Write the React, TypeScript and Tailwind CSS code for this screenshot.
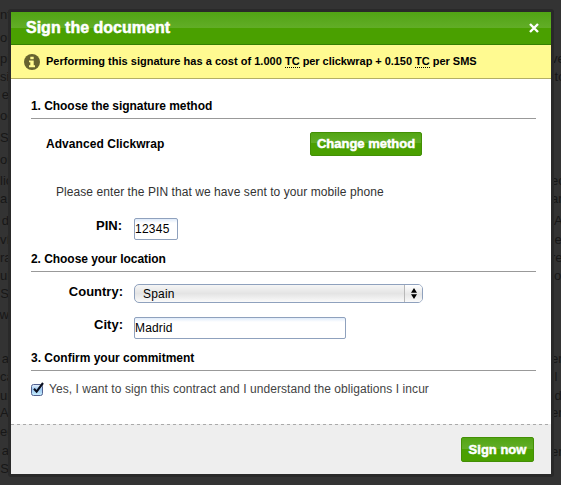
import React from 'react';

type Line = { text: string; center: number };

const leftLines: Line[] = [
  { text: 'nt', center: 15 }, { text: 'ou', center: 38 }, { text: 'pi', center: 59 },
  { text: 'si', center: 77 }, { text: 'e', center: 95 }, { text: 'oo', center: 116 },
  { text: 'SM', center: 138 }, { text: 'or', center: 160 }, { text: 'lic', center: 181 },
  { text: 'a c', center: 199 }, { text: 'd', center: 221 }, { text: 'ví', center: 240 },
  { text: 'ra', center: 258 }, { text: 'ul', center: 276 }, { text: 'S', center: 294 },
  { text: 'w', center: 315 }, { text: 'a', center: 359 }, { text: 'ca', center: 377 },
  { text: 'ur', center: 396 }, { text: 'Ac', center: 413 }, { text: 'eg', center: 432 },
  { text: 'a', center: 451 }, { text: 'S', center: 469 },
];

const rightLines: Line[] = [
  { text: 've', center: 59 }, { text: ' to', center: 77 }, { text: 'ec', center: 181 },
  { text: 'ar', center: 199 }, { text: ' A', center: 221 }, { text: ' es', center: 240 },
  { text: 're', center: 258 }, { text: 'lo', center: 276 }, { text: 'er', center: 359 },
  { text: ' l', center: 377 }, { text: ' de', center: 396 }, { text: 'er', center: 413 },
  { text: 'er', center: 452 },
];

function PageText({ lines, side }: { lines: Line[]; side: 'left' | 'right' }) {
  return (
    <div className={side === 'left' ? 'flex w-[9px] flex-col items-start overflow-hidden' : 'flex w-[10px] flex-col items-start overflow-hidden'}>
      {lines.map((line, i) => (
        <span
          key={i}
          className={
            side === 'left' && line.text.length === 1
              ? 'shrink-0 self-end whitespace-pre text-[13px] leading-4 text-[#171717]'
              : 'shrink-0 whitespace-pre text-[13px] leading-4 text-[#171717]'
          }
          style={{ marginTop: line.center - 8 - (i ? lines[i - 1].center + 8 : 0) }}
        >
          {line.text}
        </span>
      ))}
    </div>
  );
}

function SectionTitle({ children }: { children: React.ReactNode }) {
  return (
    <h2 className="h-5 border-b border-[#999] text-[12px] font-bold leading-[14px] tracking-[-0.05px] text-black">{children}</h2>
  );
}

function GreenButton({ className, children }: { className: string; children: React.ReactNode }) {
  return (
    <button
      className={`flex items-center justify-center whitespace-nowrap rounded-[2px] border border-[#438f05] bg-[linear-gradient(#52a514_0,#62ad27_46%,#4aa000_46%,#4aa000_100%)] text-[13px] font-bold leading-4 text-white [-webkit-text-stroke:0.5px_white] ${className}`}
    >
      {children}
    </button>
  );
}

function InfoIcon() {
  return (
    <svg className="block shrink-0" width="16" height="16" viewBox="0 0 16 16">
      <circle cx="8" cy="8" r="8" fill="#66632f" />
      <path d="M6.3 2.8h3.4v2.5H6.3zM5 6.4h4.7v4.9h1.3v1.9H5v-1.9h1.3V8.3H5z" fill="#fffa91" />
    </svg>
  );
}

function CheckIcon() {
  return (
    <svg className="block shrink-0" width="14" height="15" viewBox="0 0 14 15">
      <defs>
        <linearGradient id="box" x1="0" y1="0" x2="0" y2="1">
          <stop offset="0" stopColor="#eaf4ff" />
          <stop offset="0.45" stopColor="#9bc7f0" />
          <stop offset="1" stopColor="#c9f0ff" />
        </linearGradient>
      </defs>
      <rect x="0.5" y="2.5" width="11" height="11" rx="2" fill="url(#box)" stroke="#52608f" />
      <path d="M3 6.8 5.6 9.6 12 1" fill="none" stroke="#0b1020" strokeWidth="2.1" />
    </svg>
  );
}

export default function App() {
  return (
    <div className="relative h-[485px] w-[561px] overflow-hidden bg-[#333] font-['Liberation_Sans',Arial,sans-serif]">
      <div className="flex h-full justify-between">
        <PageText lines={leftLines} side="left" />
        <PageText lines={rightLines} side="right" />
      </div>

      <div className="absolute left-2 top-[9px] flex h-[468px] w-[546px] flex-col overflow-hidden rounded-[3px] border-[3px] border-[#292929] bg-white">
        <header className="flex h-[33px] shrink-0 items-center justify-between border-b border-[#348000] bg-[linear-gradient(#51a414_0,#62ad27_16px,#4aa000_16px,#4aa000_100%)] pl-[15px] pr-3">
          <h1 className="text-[16px] font-bold leading-5 text-white [-webkit-text-stroke:0.5px_white]">Sign the document</h1>
          <svg width="10" height="10" viewBox="0 0 10 10">
            <path d="M1 1 9 9M9 1 1 9" stroke="white" strokeWidth="2.4" />
          </svg>
        </header>

        <div className="flex h-[34px] shrink-0 items-center border-b border-[#b3af65] bg-[#fffa91] pl-[13px] text-[11px] font-bold leading-[13px] text-black">
          <InfoIcon />
          <p className="ml-1.5 whitespace-nowrap">
            <span className="tracking-[0.025px]">Performing this signature has a cost of 1.000 </span>
            <abbr className="border-b border-dotted border-black no-underline">TC</abbr>
            <span className="tracking-[-0.05px]"> per clickwrap + 0.150 </span>
            <abbr className="border-b border-dotted border-black no-underline">TC</abbr> per SMS
          </p>
        </div>

        <main className="flex h-[345px] shrink-0 flex-col px-5 pr-[15px] pt-5">
          <SectionTitle>1. Choose the signature method</SectionTitle>
          <div className="mt-[13px] flex h-6 items-center pl-[15px]">
            <span className="w-[264px] text-[12px] font-bold leading-4 tracking-[0.06px] text-black">Advanced Clickwrap</span>
            <GreenButton className="h-6 w-28">Change method</GreenButton>
          </div>
          <p className="mt-7 pl-[25px] text-[12px] leading-4 tracking-[0.07px] text-[#333]">Please enter the PIN that we have sent to your mobile phone</p>
          <div className="mt-[18px] flex h-[22px]">
            <label className="w-[91px] text-right text-[13px] font-bold leading-4 text-black">PIN:</label>
            <div className="ml-3 h-[22px] w-11 rounded-[2px] border border-[#8fa1bd] bg-[linear-gradient(#dfebfa_0,#fff_4px)] text-[12px] leading-[21px] tracking-[0.25px] text-black">12345</div>
          </div>
          <div className="mt-3">
            <SectionTitle>2. Choose your location</SectionTitle>
          </div>
          <div className="mt-3 flex h-[19px]">
            <label className="w-[92px] text-right text-[13px] font-bold leading-4 text-black">Country:</label>
            <div className="ml-[11px] flex h-[19px] w-[289px] items-center overflow-hidden rounded-[5px] border border-[#8fa1bd] bg-[linear-gradient(#f5f5f5_0,#e4e4e4_50%,#fafafa_100%)] pl-2 text-[12px] text-black">
              <span className="flex-1 leading-4 tracking-[0.2px]">Spain</span>
              <div className="flex h-full w-[18px] items-center justify-center border-l border-[#b8b8b8] bg-[linear-gradient(#fff,#e6e6e6_55%,#fafafa)]">
                <svg width="6" height="11" viewBox="0 0 6 11">
                  <path d="M3 0 6 4.8H0zM0 6.2h6L3 11z" fill="black" />
                </svg>
              </div>
            </div>
          </div>
          <div className="mt-3.5 flex h-[22px]">
            <label className="w-[92px] text-right text-[13px] font-bold leading-4 text-black">City:</label>
            <div className="ml-[11px] h-[22px] w-[212px] rounded-[2px] border border-[#8fa1bd] bg-[linear-gradient(#dfebfa_0,#fff_4px)] text-[12px] leading-[21px] tracking-[0.15px] text-black">Madrid</div>
          </div>
          <div className="mt-3">
            <SectionTitle>
              <span className="tracking-normal">3. Confirm your commitment</span>
            </SectionTitle>
          </div>
          <div className="mt-[11px] flex">
            <CheckIcon />
            <span className="ml-1 text-[12px] leading-[14px] tracking-[0.065px] text-[#444]">Yes, I want to sign this contract and I understand the obligations I incur</span>
          </div>
        </main>

        <footer className="flex flex-1 items-start justify-end bg-[#eee] bg-[repeating-linear-gradient(90deg,#aaa_0_3px,#eee_3px_6px)] bg-[length:100%_1px] bg-no-repeat pr-[17px] pt-[13px]">
          <GreenButton className="h-[25px] w-[73px]">Sign now</GreenButton>
        </footer>
      </div>
    </div>
  );
}
